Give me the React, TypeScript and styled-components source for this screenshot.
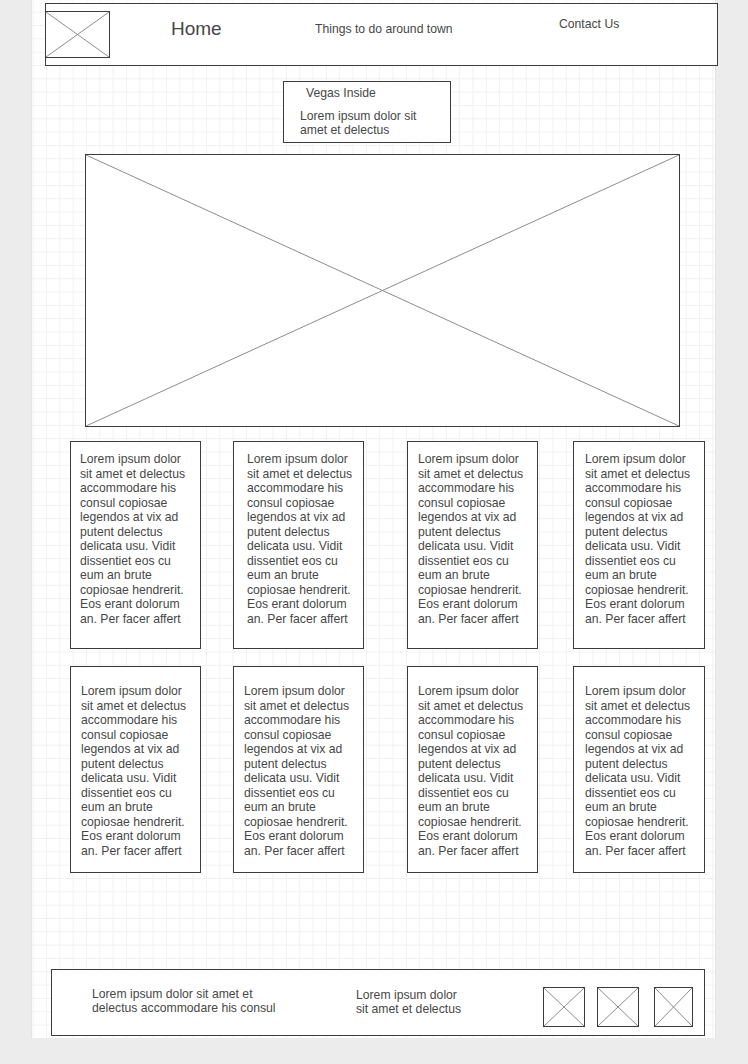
import React from 'react'
import styled, { createGlobalStyle } from 'styled-components'

const GlobalStyle = createGlobalStyle`
  body {
    margin: 0;
    background: #ececec;
    font-family: "Liberation Sans", Arial, sans-serif;
    font-size: 12.2px;
    line-height: 14px;
    color: #474747;
  }
`

const Canvas = styled.div`
  margin-left: 32px;
  width: 683px;
  height: 1038px;
  display: flex;
  flex-direction: column;
  align-items: flex-start;
  background-color: #fff;
  background-image: linear-gradient(to right, #f1f1f1 1px, transparent 1px),
    linear-gradient(to bottom, #f1f1f1 1px, transparent 1px);
  background-size: 13.333px 13.333px;
  background-position: 0.7px 11.7px;
  box-shadow: 0 0 0 1px #e4e4e4;
`

const Box = styled.div`
  box-sizing: border-box;
  border: 1px solid #3c3c3c;
  background: #fff;
`

const Header = styled(Box)`
  margin: 3px 0 0 13px;
  width: 673px;
  height: 63px;
  flex-shrink: 0;
  display: flex;
  align-items: flex-start;
`

const Placeholder = styled(Box)<{ $w: number; $h: number }>`
  width: ${p => p.$w}px;
  height: ${p => p.$h}px;
  flex-shrink: 0;

  svg {
    display: block;
    width: 100%;
    height: 100%;
  }
`

const Logo = styled(Placeholder)`
  margin: 7px 61px 0 -1px;
`

const NavItem = styled.div<{ $w?: number; $top: number; $size?: number }>`
  width: ${p => (p.$w ? `${p.$w}px` : 'auto')};
  margin-top: ${p => p.$top}px;
  font-size: ${p => p.$size || 12.2}px;
  line-height: ${p => (p.$size ? 22 : 14)}px;
  white-space: nowrap;
`

const Callout = styled(Box)`
  margin: 15px 0 0 251px;
  width: 168px;
  height: 62px;
  padding-top: 4px;
`

const CalloutTitle = styled.div`
  padding-left: 22px;
`

const CalloutBody = styled.div`
  margin-top: 9px;
  padding-left: 16px;
`

const Hero = styled(Placeholder)`
  margin: 11px 0 0 53px;
`

const CardRow = styled.div<{ $top: number }>`
  display: flex;
  margin-top: ${p => p.$top}px;
`

const Card = styled(Box)<{ $x: number; $w: number; $h: number; $px: number; $py: number }>`
  margin-left: ${p => p.$x}px;
  width: ${p => p.$w}px;
  height: ${p => p.$h}px;
  padding: ${p => p.$py}px 0 0 ${p => p.$px}px;
  line-height: 14.5px;
`

const Line = styled.span`
  display: block;
  white-space: nowrap;
`

const Footer = styled(Box)`
  margin: 96px 0 0 19px;
  width: 654px;
  height: 67px;
  flex-shrink: 0;
  display: flex;
  align-items: flex-start;
`

const FooterText = styled.div<{ $x: number; $w: number; $top: number }>`
  margin: ${p => p.$top}px 0 0 ${p => p.$x}px;
  width: ${p => p.$w}px;
  flex-shrink: 0;
`

const FooterIcon = styled(Placeholder)<{ $x: number }>`
  margin: 17px 0 0 ${p => p.$x}px;
`

const Cross = () => (
  <svg viewBox="0 0 100 100" preserveAspectRatio="none">
    <line x1="0" y1="0" x2="100" y2="100" stroke="#8c8c8c" strokeWidth="1" vectorEffect="non-scaling-stroke" />
    <line x1="100" y1="0" x2="0" y2="100" stroke="#8c8c8c" strokeWidth="1" vectorEffect="non-scaling-stroke" />
  </svg>
)

const lorem = [
  'Lorem ipsum dolor',
  'sit amet et delectus',
  'accommodare his',
  'consul copiosae',
  'legendos at vix ad',
  'putent delectus',
  'delicata usu. Vidit',
  'dissentiet eos cu',
  'eum an brute',
  'copiosae hendrerit.',
  'Eos erant dolorum',
  'an. Per facer affert',
]

const rows = [
  {
    top: 14,
    py: 10,
    h: 208,
    cards: [
      { x: 38, w: 131, px: 9 },
      { x: 32, w: 131, px: 13 },
      { x: 43, w: 131, px: 10 },
      { x: 35, w: 132, px: 11 },
    ],
  },
  {
    top: 17,
    py: 17,
    h: 207,
    cards: [
      { x: 38, w: 131, px: 10 },
      { x: 32, w: 131, px: 10 },
      { x: 43, w: 131, px: 10 },
      { x: 35, w: 132, px: 11 },
    ],
  },
]

const App = () => (
  <>
    <GlobalStyle />
    <Canvas>
      <Header>
        <Logo $w={65} $h={47}>
          <Cross />
        </Logo>
        <NavItem $w={144} $top={14} $size={19}>
          Home
        </NavItem>
        <NavItem $w={244} $top={18}>
          Things to do around town
        </NavItem>
        <NavItem $top={13}>Contact Us</NavItem>
      </Header>

      <Callout>
        <CalloutTitle>Vegas Inside</CalloutTitle>
        <CalloutBody>
          <Line>Lorem ipsum dolor sit</Line>
          <Line>amet et delectus</Line>
        </CalloutBody>
      </Callout>

      <Hero $w={595} $h={273}>
        <Cross />
      </Hero>

      {rows.map((row, ri) => (
        <CardRow key={ri} $top={row.top}>
          {row.cards.map((c, ci) => (
            <Card key={ci} $x={c.x} $w={c.w} $h={row.h} $px={c.px} $py={row.py}>
              {lorem.map(l => (
                <Line key={l}>{l}</Line>
              ))}
            </Card>
          ))}
        </CardRow>
      ))}

      <Footer>
        <FooterText $x={40} $w={224} $top={17}>
          <Line>Lorem ipsum dolor sit amet et</Line>
          <Line>delectus accommodare his consul</Line>
        </FooterText>
        <FooterText $x={40} $w={187} $top={18}>
          <Line>Lorem ipsum dolor</Line>
          <Line>sit amet et delectus</Line>
        </FooterText>
        <FooterIcon $x={0} $w={42} $h={40}>
          <Cross />
        </FooterIcon>
        <FooterIcon $x={12} $w={42} $h={40}>
          <Cross />
        </FooterIcon>
        <FooterIcon $x={15} $w={39} $h={40}>
          <Cross />
        </FooterIcon>
      </Footer>
    </Canvas>
  </>
)

export default App
